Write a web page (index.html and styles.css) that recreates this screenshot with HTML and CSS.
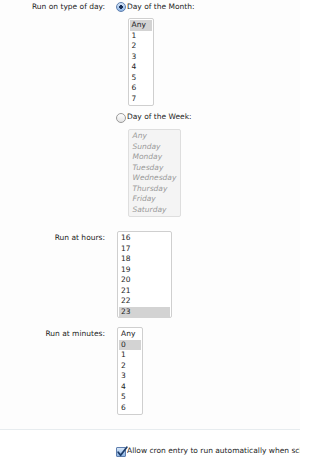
FILE: index.html
```html
<!DOCTYPE html>
<html>
<head>
<meta charset="utf-8">
<link rel="stylesheet" href="styles.css">
</head>
<body>
<div class="form">
  <div class="row row-day">
    <div class="label">Run on type of day:</div>
    <div class="field">
      <div class="opt"><span class="radio on"></span><span>Day of the Month:</span></div>
      <div class="list list-dom">
        <div class="item sel">Any</div>
        <div class="item">1</div>
        <div class="item">2</div>
        <div class="item">3</div>
        <div class="item">4</div>
        <div class="item">5</div>
        <div class="item">6</div>
        <div class="item">7</div>
      </div>
      <div class="opt opt2"><span class="radio"></span><span>Day of the Week:</span></div>
      <div class="list list-dow disabled">
        <div class="item">Any</div>
        <div class="item">Sunday</div>
        <div class="item">Monday</div>
        <div class="item">Tuesday</div>
        <div class="item">Wednesday</div>
        <div class="item">Thursday</div>
        <div class="item">Friday</div>
        <div class="item">Saturday</div>
      </div>
    </div>
  </div>
  <div class="row row-hours">
    <div class="label">Run at hours:</div>
    <div class="field">
      <div class="list list-hours">
        <div class="item">16</div>
        <div class="item">17</div>
        <div class="item">18</div>
        <div class="item">19</div>
        <div class="item">20</div>
        <div class="item">21</div>
        <div class="item">22</div>
        <div class="item sel">23</div>
      </div>
    </div>
  </div>
  <div class="row row-min">
    <div class="label">Run at minutes:</div>
    <div class="field">
      <div class="list list-min">
        <div class="item">Any</div>
        <div class="item sel">0</div>
        <div class="item">1</div>
        <div class="item">2</div>
        <div class="item">3</div>
        <div class="item">4</div>
        <div class="item">5</div>
        <div class="item">6</div>
      </div>
    </div>
  </div>
</div>
<div class="footer">
  <label class="check-row">
    <span class="checkbox"><svg width="12" height="12" viewBox="0 0 12 12"><path d="M2.2 6.2 L4.6 9.2 L10.8 1.2" fill="none" stroke="#1d3d6b" stroke-width="1.8" stroke-linecap="round" stroke-linejoin="round"/></svg></span>
    <span class="check-text">Allow cron entry to run automatically when scheduled</span>
  </label>
</div>
</body>
</html>
```
FILE: styles.css
```css
html, body {
  margin: 0;
  padding: 0;
  background: #ffffff;
  overflow: hidden;
}
body {
  width: 300px;
  height: 459px;
  font-family: "DejaVu Sans", Verdana, sans-serif;
  font-size: 7.5px;
  color: #1e1e1e;
  line-height: 10.57px;
}
.form {
  padding-top: 2px;
  background: #fdfdfd;
  padding-bottom: 14px;
  border-bottom: 1px solid #e7ecef;
}
.row {
  display: grid;
  grid-template-columns: 105px 1fr;
  column-gap: 11px;
}
.label {
  text-align: right;
  white-space: nowrap;
}
.row-hours {
  margin-top: 14px;
}
.row-hours .label {
  padding-top: 2px;
}
.row-min {
  margin-top: 9px;
}
.row-min .label {
  padding-top: 1.5px;
}
.opt {
  display: flex;
  align-items: center;
  height: 10.5px;
  gap: 1px;
  white-space: nowrap;
}
.opt2 {
  margin-top: 6.5px;
}
.radio {
  width: 8px;
  height: 8px;
  border-radius: 50%;
  border: 1px solid #9a9a9a;
  background: linear-gradient(#ffffff, #e4e4e4);
  flex: none;
}
.radio.on {
  border-color: #5f7fae;
  background:
    radial-gradient(circle, #1b2f55 0 1.6px, transparent 2.1px),
    linear-gradient(#d6e6f8, #8db4e4);
}
.list {
  border: 1px solid #cfcfcf;
  border-radius: 2px;
  background: #ffffff;
  padding: 1px;
  box-sizing: border-box;
}
.item {
  height: 10.57px;
  padding-left: 1.5px;
  white-space: nowrap;
}
.item.sel {
  background: #d3d3d3;
}
.list-dom {
  width: 26px;
  height: 88px;
  margin-left: 12px;
  margin-top: 5.5px;
}
.list-dow {
  width: 53px;
  height: 88px;
  margin-left: 12px;
  margin-top: 6px;
}
.disabled {
  background: #f4f4f4;
  border-color: #dedede;
  color: #9a9a9a;
  font-style: italic;
}
.disabled .item {
  padding-left: 2.5px;
}
.list-hours {
  width: 55px;
  height: 87px;
  margin-left: 1px;
}
.list-hours .item {
  padding-left: 2px;
}
.list-min {
  width: 26px;
  height: 88px;
  margin-left: 1px;
}
.list-min .item {
  padding-left: 2px;
}
.footer {
  padding-top: 16px;
  padding-left: 116px;
  overflow: hidden;
}
.check-row {
  display: flex;
  align-items: center;
  gap: 1px;
  white-space: nowrap;
  height: 11px;
}
.check-text {
  overflow: hidden;
}
.checkbox {
  position: relative;
  width: 8px;
  height: 8px;
  border: 1px solid #5f7fae;
  border-radius: 1px;
  background: linear-gradient(#d6e6f8, #8db4e4);
  flex: none;
}
.checkbox svg {
  position: absolute;
  left: -1px;
  top: -2px;
}
```
